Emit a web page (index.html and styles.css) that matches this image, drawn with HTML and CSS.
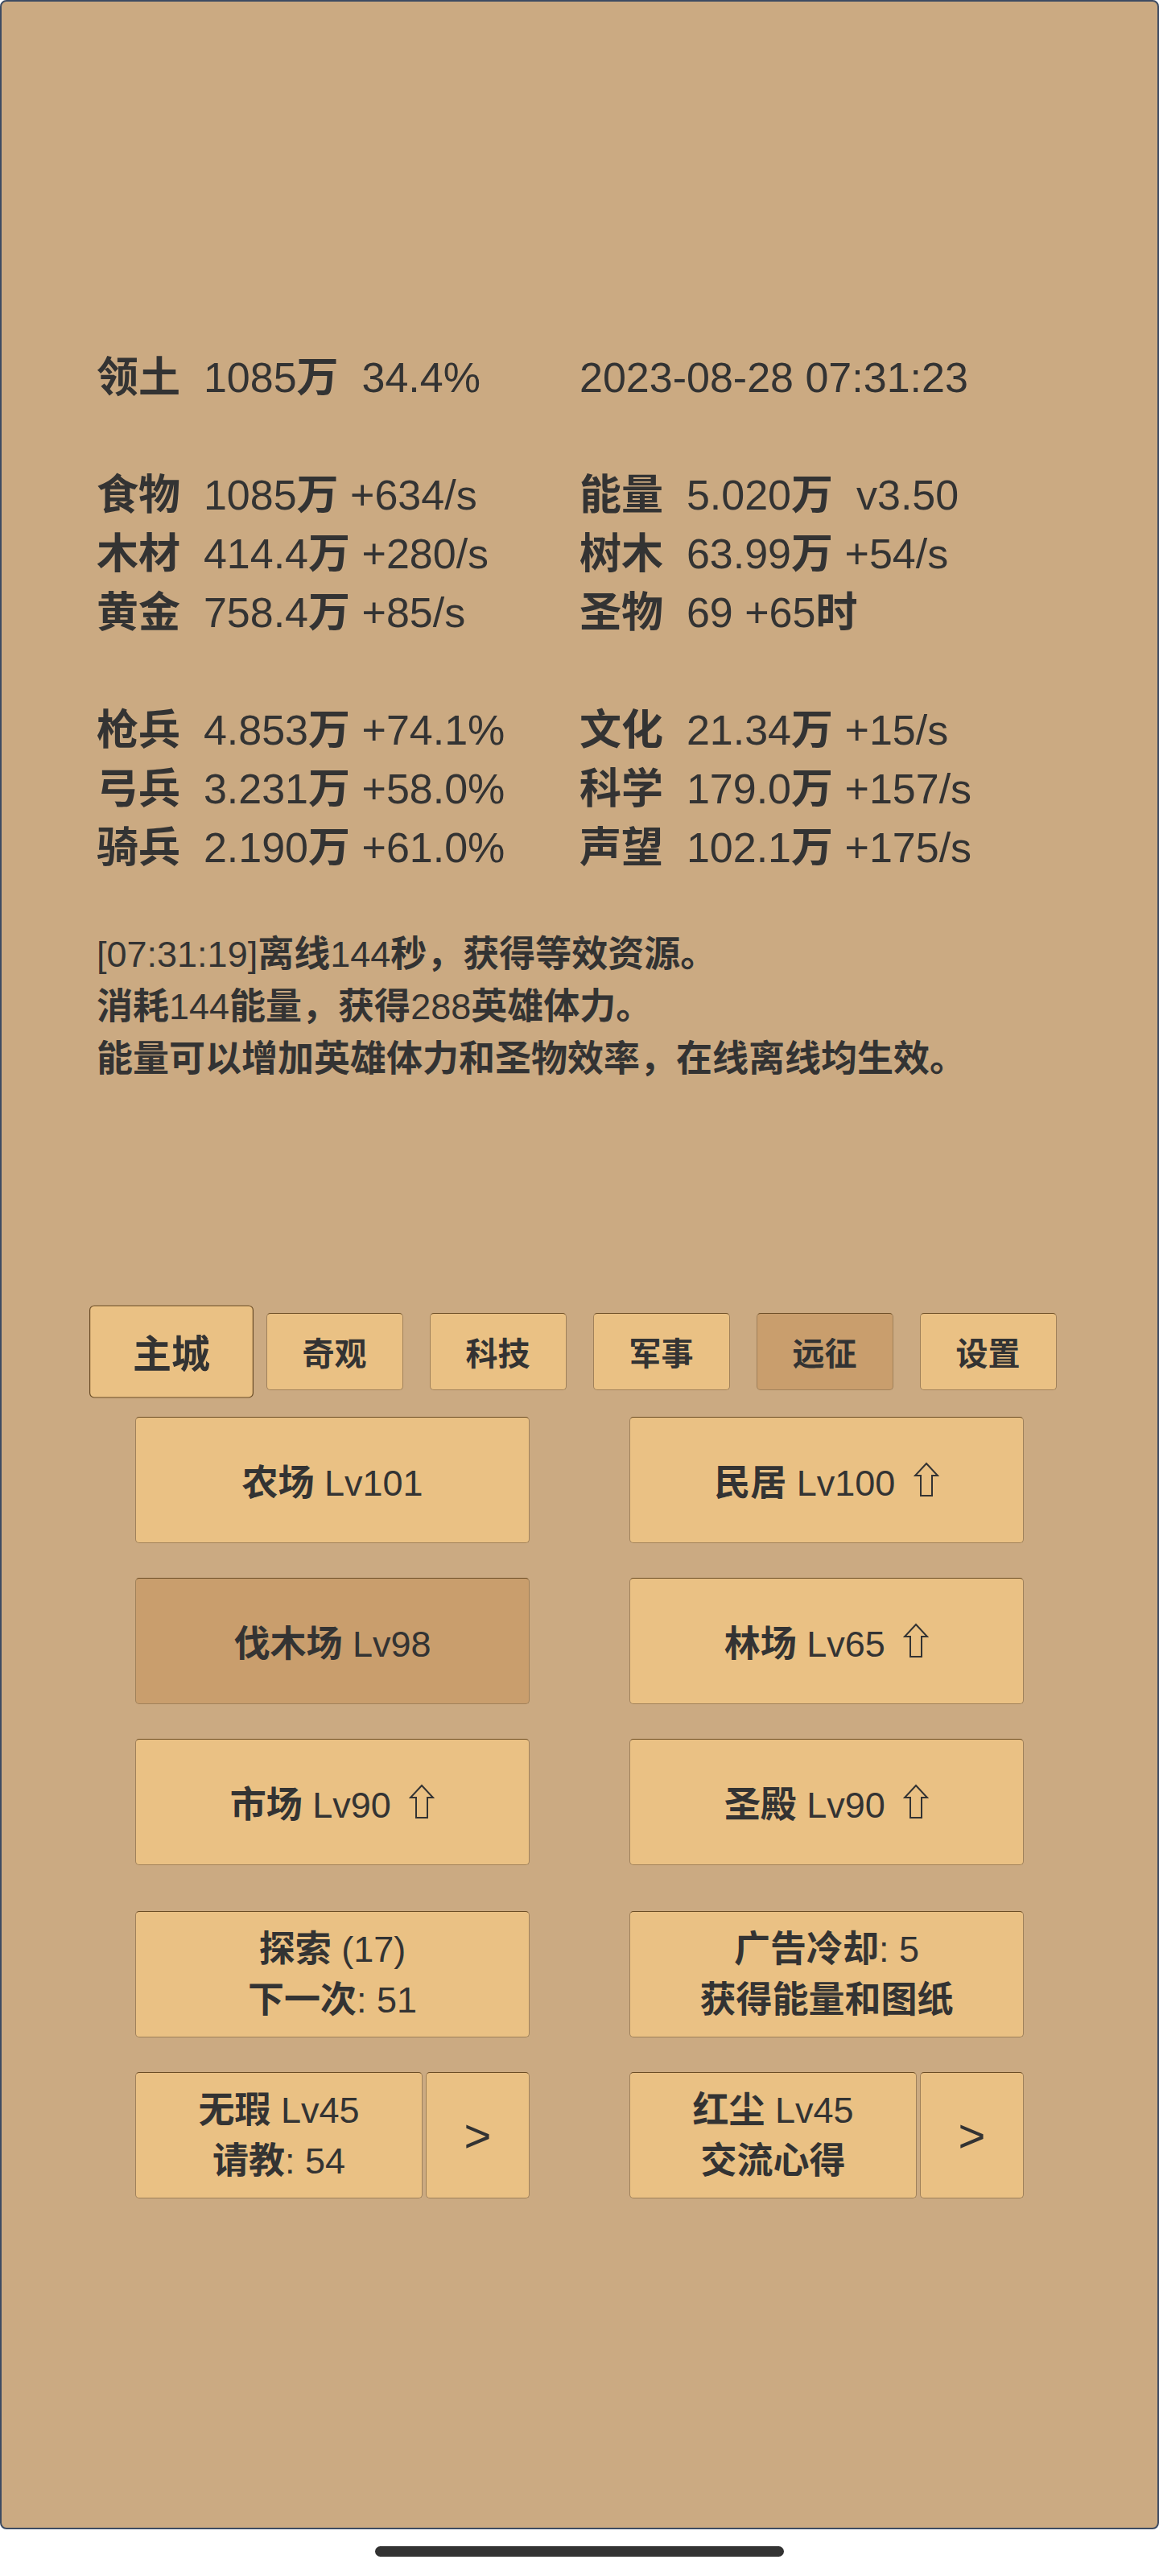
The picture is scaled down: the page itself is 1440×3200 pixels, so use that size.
FILE: index.html
```
<!DOCTYPE html>
<html lang="zh-CN">
<head>
  <meta charset="UTF-8">
  <meta name="viewport" content="width=device-width, initial-scale=1.0">
  <title>领土</title>
  <link rel="stylesheet" href="styles.css">
</head>
<body>
  <div class="frame">
    <div class="stats">
      <div class="group">
        <div class="row"><span><b>领土</b>  1085<b>万</b>  34.4%</span><span>2023-08-28 07:31:23</span></div>
      </div>
      <div class="group">
        <div class="row"><span><b>食物</b>  1085<b>万</b> +634/s</span><span><b>能量</b>  5.020<b>万</b>  v3.50</span></div>
        <div class="row"><span><b>木材</b>  414.4<b>万</b> +280/s</span><span><b>树木</b>  63.99<b>万</b> +54/s</span></div>
        <div class="row"><span><b>黄金</b>  758.4<b>万</b> +85/s</span><span><b>圣物</b>  69 +65<b>时</b></span></div>
      </div>
      <div class="group">
        <div class="row"><span><b>枪兵</b>  4.853<b>万</b> +74.1%</span><span><b>文化</b>  21.34<b>万</b> +15/s</span></div>
        <div class="row"><span><b>弓兵</b>  3.231<b>万</b> +58.0%</span><span><b>科学</b>  179.0<b>万</b> +157/s</span></div>
        <div class="row"><span><b>骑兵</b>  2.190<b>万</b> +61.0%</span><span><b>声望</b>  102.1<b>万</b> +175/s</span></div>
      </div>
    </div>

    <div class="log">
      <div>[07:31:19]<b>离线</b>144<b>秒，获得等效资源。</b></div>
      <div><b>消耗</b>144<b>能量，获得</b>288<b>英雄体力。</b></div>
      <div><b>能量可以增加英雄体力和圣物效率，在线离线均生效。</b></div>
    </div>

    <div class="tabs">
      <div class="tab selected">主城</div>
      <div class="tab">奇观</div>
      <div class="tab">科技</div>
      <div class="tab">军事</div>
      <div class="tab active">远征</div>
      <div class="tab">设置</div>
    </div>

    <div class="btns">
      <div class="btn"><span><b>农场</b> Lv101</span></div>
      <div class="btn"><span><b>民居</b> Lv100 <svg class="up" viewBox="0 0 32 44"><path d="M16 2 L30 17 L23 17 L23 42 L9 42 L9 17 L2 17 Z"/></svg></span></div>
      <div class="btn active"><span><b>伐木场</b> Lv98</span></div>
      <div class="btn"><span><b>林场</b> Lv65 <svg class="up" viewBox="0 0 32 44"><path d="M16 2 L30 17 L23 17 L23 42 L9 42 L9 17 L2 17 Z"/></svg></span></div>
      <div class="btn"><span><b>市场</b> Lv90 <svg class="up" viewBox="0 0 32 44"><path d="M16 2 L30 17 L23 17 L23 42 L9 42 L9 17 L2 17 Z"/></svg></span></div>
      <div class="btn"><span><b>圣殿</b> Lv90 <svg class="up" viewBox="0 0 32 44"><path d="M16 2 L30 17 L23 17 L23 42 L9 42 L9 17 L2 17 Z"/></svg></span></div>
    </div>

    <div class="btns extra">
      <div class="btn two"><span><b>探索</b> (17)<br><b>下一次</b>: 51</span></div>
      <div class="btn two"><span><b>广告冷却</b>: 5<br><b>获得能量和图纸</b></span></div>
      <div class="split">
        <div class="btn two"><span><b>无瑕</b> Lv45<br><b>请教</b>: 54</span></div>
        <div class="btn arrow">&gt;</div>
      </div>
      <div class="split">
        <div class="btn two"><span><b>红尘</b> Lv45<br><b>交流心得</b></span></div>
        <div class="btn arrow">&gt;</div>
      </div>
    </div>
  </div>
  <div class="homebar"></div>
</body>
</html>
```
FILE: styles.css
```
body {
  margin: 0;
  background: white;
  font-family: "Liberation Sans", "Noto Sans CJK SC", sans-serif;
  color: #333;
}
b {
  font-weight: bold;
}
.frame {
  height: 3142px;
  box-sizing: border-box;
  border: 2px solid #3d4b62;
  border-radius: 8px;
  background: #cbaa82;
  overflow: hidden;
}
.stats {
  padding: 431px 0 0 118px;
  font-size: 52px;
  line-height: 73px;
}
.group + .group {
  margin-top: 73px;
}
.row {
  display: grid;
  grid-template-columns: 600px auto;
  white-space: pre;
}
.log {
  margin: 63px 0 0 118px;
  font-size: 45px;
  line-height: 65px;
}
.tabs {
  display: flex;
  justify-content: center;
  gap: 33px;
  margin-top: 283px;
}
.tab {
  width: 170px;
  height: 96px;
  box-sizing: border-box;
  display: flex;
  align-items: center;
  justify-content: center;
  font-size: 40px;
  font-weight: bold;
  background: #eac184;
  border: 1px solid #a0815a;
  border-top-color: #6a4c26;
  border-radius: 5px;
}
.tab.selected {
  transform: scale(1.2);
  border-color: #6a4c26;
}
.tab.active {
  background: #c99e6d;
}
.btns {
  display: grid;
  grid-template-columns: 490px 490px;
  column-gap: 124px;
  row-gap: 43px;
  justify-content: center;
  margin-top: 33px;
}
.btns.extra {
  margin-top: 57px;
}
.btn {
  height: 157px;
  box-sizing: border-box;
  display: flex;
  align-items: center;
  justify-content: center;
  text-align: center;
  font-size: 45px;
  background: #eac184;
  border: 1px solid #a0815a;
  border-top-color: #6a4c26;
  border-radius: 5px;
}
.btn.active {
  background: #c99e6d;
}
.btn.two {
  line-height: 63px;
}
.split {
  display: flex;
  gap: 4px;
}
.split .two {
  flex: 1;
}
.btn.arrow {
  width: 129px;
  font-size: 58px;
}
.up {
  width: 32px;
  height: 44px;
  margin-left: 10px;
  margin-bottom: -2px;
  fill: none;
  stroke: #333;
  stroke-width: 2;
}
.homebar {
  width: 508px;
  height: 13px;
  margin: 21px auto 0;
  border-radius: 7px;
  background: #333;
}
```
